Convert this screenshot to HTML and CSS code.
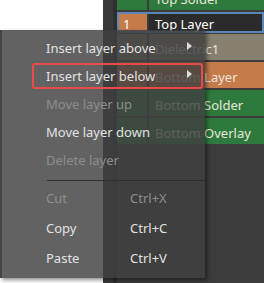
FILE: index.html
```html
<!DOCTYPE html>
<html lang="en">
<head>
    <meta charset="UTF-8">
    <meta name="viewport" content="width=device-width, initial-scale=1.0">
    <title>Layer Stack</title>
    <link rel="stylesheet" href="styles.css">
</head>
<body>
    <div class="stage">
        <div class="side-panel"></div>
        <div class="splitter"></div>

        <div class="layer-table">
            <div class="layer-row solder">
                <div class="num-cell"></div>
                <div class="name-cell">Top Solder</div>
            </div>
            <div class="layer-row current">
                <div class="num-cell">1</div>
                <div class="name-cell">Top Layer</div>
            </div>
            <div class="layer-row dielectric">
                <div class="num-cell"></div>
                <div class="name-cell">Dielectric1</div>
            </div>
            <div class="layer-row copper">
                <div class="num-cell"></div>
                <div class="name-cell">Bottom Layer</div>
            </div>
            <div class="layer-row solder">
                <div class="num-cell"></div>
                <div class="name-cell">Bottom Solder</div>
            </div>
            <div class="layer-row solder">
                <div class="num-cell"></div>
                <div class="name-cell">Bottom Overlay</div>
            </div>
        </div>

        <!-- context menu -->
        <div class="context-menu">
            <div class="menu-item">
                <span class="label">Insert layer above</span>
                <span class="arrow"></span>
            </div>
            <div class="menu-item active">
                <span class="label">Insert layer below</span>
                <span class="arrow"></span>
            </div>
            <div class="menu-item disabled">
                <span class="label">Move layer up</span>
            </div>
            <div class="menu-item">
                <span class="label">Move layer down</span>
            </div>
            <div class="menu-item disabled">
                <span class="label">Delete layer</span>
            </div>
            <div class="menu-sep"></div>
            <div class="menu-item disabled">
                <span class="label">Cut</span>
                <span class="shortcut">Ctrl+X</span>
            </div>
            <div class="menu-item">
                <span class="label">Copy</span>
                <span class="shortcut">Ctrl+C</span>
            </div>
            <div class="menu-item">
                <span class="label">Paste</span>
                <span class="shortcut">Ctrl+V</span>
            </div>
        </div>
    </div>
</body>
</html>
```

FILE: styles.css
```css
body {
    margin: 0;
    background-color: #3c3c3c;
    font-family: 'Noto Sans', 'DejaVu Sans', sans-serif;
    font-size: 13px;
}

.stage {
    position: relative;
    display: flex;
    width: 264px;
    height: 283px;
    overflow: hidden;
}

.side-panel {
    width: 103px;
    background-color: #ffffff;
}

.splitter {
    width: 10px;
    background-color: #3a3a3a;
    border-right: 4px solid #2f2f2f;
}

.layer-table {
    flex: 1;
    display: flex;
    flex-direction: column;
    gap: 2px;
    margin-top: -16px;
    background-color: #3c3c3c;
}

.layer-row {
    display: flex;
    flex-shrink: 0;
    height: 26px;
    box-sizing: border-box;
    color: #e9e6dc;
    overflow: hidden;
}

.num-cell {
    width: 30px;
    margin-right: 2px;
}

.name-cell {
    flex: 1;
    padding: 7px 0 0 6px;
    line-height: 16px;
    white-space: nowrap;
}

.solder .num-cell, .solder .name-cell {
    background-color: #2e7a3c;
}

.copper .num-cell, .copper .name-cell {
    background-color: #c67b4b;
}

.dielectric .num-cell, .dielectric .name-cell {
    background-color: #878070;
}

.layer-row.current {
    height: 21px;
    margin-bottom: -1px;
    border: 2px solid #5b86b5;
    color: #ffffff;
    overflow: visible;
}

.current .num-cell {
    width: 28px;
    background-color: #c67b4b;
    padding: 4px 0 0 4px;
    box-sizing: border-box;
    line-height: 13px;
}

.current .name-cell {
    background-color: #2b2b2b;
    padding: 4px 0 0 6px;
    line-height: 13px;
}

/* menu sits over the panels */
.context-menu {
    position: absolute;
    left: 0;
    top: 30px;
    width: 205px;
    height: 248px;
    box-sizing: border-box;
    padding-top: 3px;
    background-color: rgba(64, 64, 64, 0.82);
    border-left: 2px solid rgba(40, 40, 40, 0.5);
    box-shadow: 2px 2px 4px rgba(0, 0, 0, 0.45);
}

.menu-item {
    display: flex;
    align-items: center;
    height: 26px;
    margin: 2px 2px 0 30px;
    padding: 0 9px 0 12px;
    box-sizing: border-box;
    border: 2px solid transparent;
    border-radius: 3px;
    color: #e2e2e2;
    line-height: 22px;
    white-space: nowrap;
}

.menu-sep ~ .menu-item {
    margin-top: 4px;
}

.menu-item.active {
    border-color: #ec4a4a;
}

.menu-item.disabled {
    color: #8d8d8d;
}

.label {
    width: 84px;
}

.arrow {
    margin-left: auto;
    margin-top: -4px;
    border-left: 5px solid #dddddd;
    border-top: 4px solid transparent;
    border-bottom: 4px solid transparent;
}

.menu-sep {
    height: 1px;
    margin: 7px 0 1px 45px;
    background-color: #2e2e2e;
}
```
